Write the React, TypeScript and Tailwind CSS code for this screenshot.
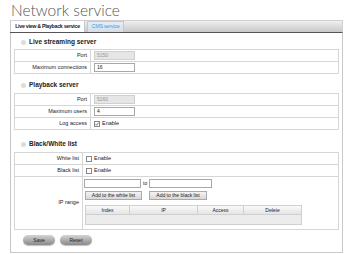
import type { ReactNode } from 'react'

const font = { fontFamily: '"Liberation Sans", Arial, sans-serif' }

const Bullet = () => <span className="inline-block w-[5px] h-[5px] rounded-full bg-[#dcdcdc] mr-[3px]" />

const SectionTitle = ({ children }: { children: ReactNode }) => (
  <div className="flex items-center pl-[7px] h-[10px] text-[6.5px] font-bold text-[#222] whitespace-nowrap">
    <Bullet />
    {children}
  </div>
)

const Row = ({ label, children, labelW = 'w-[76px]' }: { label: string; children: ReactNode; labelW?: string }) => (
  <div className="flex h-[12px] border-t border-[#d6d6d6]">
    <div className={`${labelW} shrink-0 border-r border-[#d6d6d6] flex items-center justify-end pr-[3px] text-[5.5px] leading-none text-[#222] whitespace-nowrap`}>
      {label}
    </div>
    <div className="flex-1 flex items-center pl-[3px]">{children}</div>
  </div>
)

const TextInput = ({ value = '', disabled = false, w = 'w-[41px]' }: { value?: string; disabled?: boolean; w?: string }) => (
  <div
    className={`${w} h-[9px] border flex items-center pl-[2px] text-[5px] leading-none ${
      disabled ? 'bg-[#e6e6e6] border-[#d0d0d0] text-[#999]' : 'bg-white border-[#a8a8a8] text-[#222]'
    }`}
  >
    {value}
  </div>
)

const Check = ({ checked = false }: { checked?: boolean }) => (
  <div className="flex items-center gap-[2px] text-[5.5px] leading-none text-[#222]">
    <div className="w-[6px] h-[6px] border border-[#888] bg-white flex items-center justify-center">
      {checked && (
        <svg viewBox="0 0 6 6" className="w-[6px] h-[6px]">
          <path d="M0.8 3.2 L2.4 4.8 L5.4 0.9" fill="none" stroke="#222" strokeWidth="1" />
        </svg>
      )}
    </div>
    Enable
  </div>
)

const SmallButton = ({ children, w }: { children: ReactNode; w: string }) => (
  <div
    className={`${w} h-[9px] border border-[#aaa] bg-gradient-to-b from-[#f4f4f4] to-[#d8d8d8] flex items-center justify-center text-[5px] leading-none text-[#222] whitespace-nowrap`}
  >
    {children}
  </div>
)

const PillButton = ({ children }: { children: ReactNode }) => (
  <div className="w-[32px] h-[10px] rounded-full bg-gradient-to-b from-[#d4d4d4] to-[#8a8a8a] shadow-[0_1px_1px_rgba(0,0,0,0.25)] flex items-center justify-center text-[5px] leading-none text-[#222]">
    {children}
  </div>
)

export default function App() {
  return (
    <div className="w-[346px] h-[254px] bg-white overflow-hidden" style={font}>
      {/* Title */}
      <div
        className="h-[20px] pl-[11px] text-[15.5px] leading-[20px] text-[#555] font-light"
        style={{ fontFamily: 'Lato, "Liberation Sans", sans-serif' }}
      >
        Network service
      </div>

      {/* Tabs */}
      <div className="ml-[10px] w-[333px] h-[13px] flex items-end bg-gradient-to-b from-[#f0f0f0] to-[#c8c8c8] border-t border-r border-[#d0d0d0] border-b-[1px] border-b-[#555]">
        <div className="h-full w-[75px] bg-white border-l border-r border-[#c8c8c8] flex items-center justify-center text-[5.3px] leading-none tracking-[-0.3px] font-semibold text-[#222] whitespace-nowrap">
          Live view &amp; Playback service
        </div>
        <div className="h-[11px] ml-[2px] w-[37px] bg-gradient-to-b from-[#e8eef4] to-[#d4dde6] border-t border-l border-r border-[#c8c8c8] flex items-center justify-center text-[5.3px] leading-none tracking-[-0.2px] text-[#3aa0e8] whitespace-nowrap">
          CMS service
        </div>
      </div>

      {/* Panel */}
      <div className="ml-[10px] w-[333px] h-[220px] border border-t-0 border-[#c8c8c8] pt-[4px] px-[3px]">
        <SectionTitle>Live streaming server</SectionTitle>
        <div className="mt-[2px] border-x border-b border-[#d6d6d6]">
          <Row label="Port">
            <TextInput value="5150" disabled />
          </Row>
          <Row label="Maximum connections">
            <TextInput value="16" />
          </Row>
        </div>

        <div className="mt-[6px]" />
        <SectionTitle>Playback server</SectionTitle>
        <div className="mt-[3px] border-x border-b border-[#d6d6d6]">
          <Row label="Port">
            <TextInput value="5160" disabled />
          </Row>
          <Row label="Maximum users">
            <TextInput value="4" />
          </Row>
          <Row label="Log access">
            <Check checked />
          </Row>
        </div>

        <div className="mt-[9px]" />
        <SectionTitle>Black/White list</SectionTitle>
        <div className="mt-[3px] border-x border-b border-[#d6d6d6]">
          <Row label="White list" labelW="w-[68px]">
            <Check />
          </Row>
          <Row label="Black list" labelW="w-[68px]">
            <Check />
          </Row>
          <div className="flex h-[53px] border-t border-[#d6d6d6]">
            <div className="w-[68px] shrink-0 border-r border-[#d6d6d6] flex items-center justify-end pr-[3px] text-[5.5px] leading-none text-[#222]">
              IP range
            </div>
            <div className="flex-1 pl-[1px] pt-[2px]">
              <div className="flex items-center h-[9px]">
                <TextInput w="w-[57px]" />
                <span className="mx-[2px] text-[5px] leading-none text-[#222]">to</span>
                <TextInput w="w-[63px]" />
              </div>
              <div className="flex items-center gap-[7px] mt-[3px] pl-[1px]">
                <SmallButton w="w-[57px]">Add to the white list</SmallButton>
                <SmallButton w="w-[58px]">Add to the black list</SmallButton>
              </div>
              <div className="mt-[5px] ml-[1px] w-[217px] border border-[#d0d0d0]">
                <div className="flex h-[9px] bg-gradient-to-b from-[#fafafa] to-[#e4e4e4] border-b border-[#d0d0d0] text-[5px] leading-none text-[#222]">
                  <div className="w-[44px] border-r border-[#d0d0d0] flex items-center justify-center">Index</div>
                  <div className="w-[68px] border-r border-[#d0d0d0] flex items-center justify-center">IP</div>
                  <div className="w-[46px] border-r border-[#d0d0d0] flex items-center justify-center">Access</div>
                  <div className="flex-1 flex items-center justify-center">Delete</div>
                </div>
                <div className="h-[9px] bg-[#ececec]" />
              </div>
            </div>
          </div>
        </div>

        <div className="flex gap-[5px] mt-[5px] pl-[9px]">
          <PillButton>Save</PillButton>
          <PillButton>Reset</PillButton>
        </div>
      </div>
    </div>
  )
}
